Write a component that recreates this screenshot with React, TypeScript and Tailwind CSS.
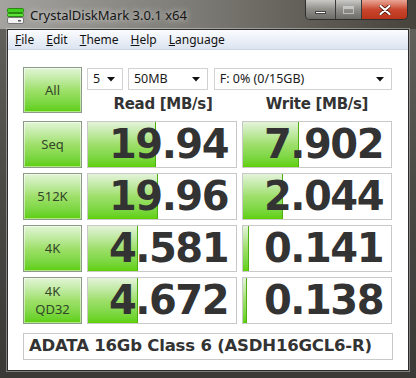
import React from 'react';

const rows = [
    { label: ['Seq'], read: '19.94', write: '7.902', rw: 68, ww: 56 },
    { label: ['512K'], read: '19.96', write: '2.044', rw: 70, ww: 40 },
    { label: ['4K'], read: '4.581', write: '0.141', rw: 50, ww: 6 },
    { label: ['4K', 'QD32'], read: '4.672', write: '0.138', rw: 50, ww: 4 },
];

const tahoma = { fontFamily: '"DejaVu Sans", Verdana, sans-serif' };

function Arrow() {
    return (
        <svg width="8" height="5" viewBox="0 0 8 5" className="shrink-0">
            <path d="M0 0 H8 L4 4.5 Z" fill="#111" />
        </svg>
    );
}

function Combo({ text, width }: { text: string; width: string }) {
    return (
        <div className={`${width} h-[22px] flex items-center justify-between pl-[5px] pr-[7px] bg-white border border-[#d2d2d2] text-[12.5px] text-[#1a1a1a]`}>
            <span>{text}</span>
            <Arrow />
        </div>
    );
}

function GreenButton({ lines }: { lines: string[] }) {
    return (
        <div className="h-full flex flex-col items-center justify-center border border-[#8e9a88] bg-gradient-to-b from-[#e2f5d6] via-[#9fe06a] to-[#5ccf00] shadow-[inset_0_0_0_1px_rgba(255,255,255,0.5)] text-[#34462a] text-[13px] leading-[18px]">
            {lines.map((l) => (
                <span key={l}>{l}</span>
            ))}
        </div>
    );
}

function ValueBox({ value, bar }: { value: string; bar: number }) {
    return (
        <div className="relative h-full bg-white border border-[#c9c9c9] overflow-hidden">
            <div
                className="absolute left-0 top-0 bottom-0 bg-gradient-to-b from-[#e4f3da] via-[#9edf6a] to-[#5fd000] border-r border-[#4fae10]"
                style={{ width: bar }}
            />
            <div
                className="relative h-full flex items-center justify-end pr-[8px] text-[40px] font-bold tracking-[-1.5px] text-[#333333]"
                style={tahoma}
            >
                {value}
            </div>
        </div>
    );
}

export default function App() {
    return (
        <div
            className="w-[416px] h-[378px] flex flex-col bg-gradient-to-b from-[#65645f] via-[#4a4944] to-[#3a3936] overflow-hidden"
            style={{ fontFamily: '"Noto Sans", "Open Sans", sans-serif' }}
        >
            {/* title bar */}
            <div className="h-[29px] shrink-0 flex items-start justify-between bg-gradient-to-r from-[#a4a39f] via-[#7a7872] to-[#46433c]">
                <div className="flex items-center gap-[6px] pl-[7px] pt-[6px]">
                    <svg width="17" height="16" viewBox="0 0 17 16">
                        <rect x="0.5" y="0.5" width="16" height="4" rx="1" fill="#3fcf1f" stroke="#2a8a10" />
                        <rect x="0.5" y="5.5" width="16" height="3" rx="1" fill="#5ee03a" stroke="#2a8a10" />
                        <rect x="0.5" y="9.5" width="16" height="6" rx="1.5" fill="#f2f2f2" stroke="#777" />
                        <rect x="11" y="12" width="3" height="1.5" fill="#555" />
                    </svg>
                    <span className="text-[13px] text-[#151515] [text-shadow:0_0_6px_rgba(255,255,255,0.9)]">
                        CrystalDiskMark 3.0.1 x64
                    </span>
                </div>
                <div className="flex h-[20px] mr-[8px] rounded-b-[5px] border border-t-0 border-[#2e2e2e] overflow-hidden">
                    <div className="w-[30px] flex items-center justify-center bg-gradient-to-b from-[#c9c9c6] via-[#8f8e89] to-[#6d6c68] border-r border-[#3a3a3a]">
                        <div className="w-[11px] h-[3px] mt-[5px] bg-white border border-[#444]" />
                    </div>
                    <div className="w-[26px] flex items-center justify-center bg-gradient-to-b from-[#c9c9c6] via-[#8f8e89] to-[#6d6c68] border-r border-[#3a3a3a]">
                        <div className="w-[11px] h-[8px] border border-[#d8d8d8] border-t-[3px] opacity-70" />
                    </div>
                    <div className="w-[45px] flex items-center justify-center bg-gradient-to-b from-[#e9a596] via-[#c9472e] to-[#b93318]">
                        <svg width="12" height="10" viewBox="0 0 12 10">
                            <path d="M1.5 1 L10.5 9 M10.5 1 L1.5 9" stroke="#4a1408" strokeWidth="3.6" strokeLinecap="round" />
                            <path d="M1.5 1 L10.5 9 M10.5 1 L1.5 9" stroke="#fff" strokeWidth="2.2" strokeLinecap="round" />
                        </svg>
                    </div>
                </div>
            </div>

            {/* window body */}
            <div className="flex-1 mx-[7px] border border-[#2b2b2b] shadow-[0_0_0_1px_rgba(255,255,255,0.35)] flex flex-col bg-white">
                <div className="h-[20px] shrink-0 flex items-center gap-[12px] pl-[7px] text-[12px] text-[#111] bg-gradient-to-b from-[#fbfcfe] to-[#dbe4f1] border-b border-[#cdd6e2]">
                    <span><u>F</u>ile</span>
                    <span><u>E</u>dit</span>
                    <span><u>T</u>heme</span>
                    <span><u>H</u>elp</span>
                    <span><u>L</u>anguage</span>
                </div>

                <div className="flex-1 pl-[15px] pt-[17px]">
                    <div className="grid grid-cols-[59px_150px_150px] gap-x-[5px] gap-y-[5px]">
                        <div className="h-[46px]">
                            <GreenButton lines={['All']} />
                        </div>
                        <div className="col-span-2 flex flex-col">
                            <div className="flex gap-[5px] pt-[1px]">
                                <Combo text="5" width="w-[36px]" />
                                <Combo text="50MB" width="w-[80px]" />
                                <Combo text="F: 0% (0/15GB)" width="w-[179px] ml-[1px]" />
                            </div>
                            <div className="grid grid-cols-2 gap-x-[5px] mt-[3px] text-[15px] font-bold text-[#333] tracking-[-0.3px]" style={tahoma}>
                                <div className="text-center pl-[2px]">Read [MB/s]</div>
                                <div className="text-center">Write [MB/s]</div>
                            </div>
                        </div>

                        {rows.map((r) => (
                            <React.Fragment key={r.read + r.write}>
                                <div className="h-[47px]">
                                    <GreenButton lines={r.label} />
                                </div>
                                <div className="h-[47px]">
                                    <ValueBox value={r.read} bar={r.rw} />
                                </div>
                                <div className="h-[47px]">
                                    <ValueBox value={r.write} bar={r.ww} />
                                </div>
                            </React.Fragment>
                        ))}
                    </div>

                    <div
                        className="mt-[9px] w-[370px] h-[27px] flex items-center pl-[5px] bg-white border border-[#c9c9c9] text-[16.5px] font-bold text-[#333] tracking-[-0.2px]"
                        style={tahoma}
                    >
                        ADATA 16Gb Class 6 (ASDH16GCL6-R)
                    </div>
                </div>
            </div>
            <div className="h-[7px] shrink-0" />
        </div>
    );
}
